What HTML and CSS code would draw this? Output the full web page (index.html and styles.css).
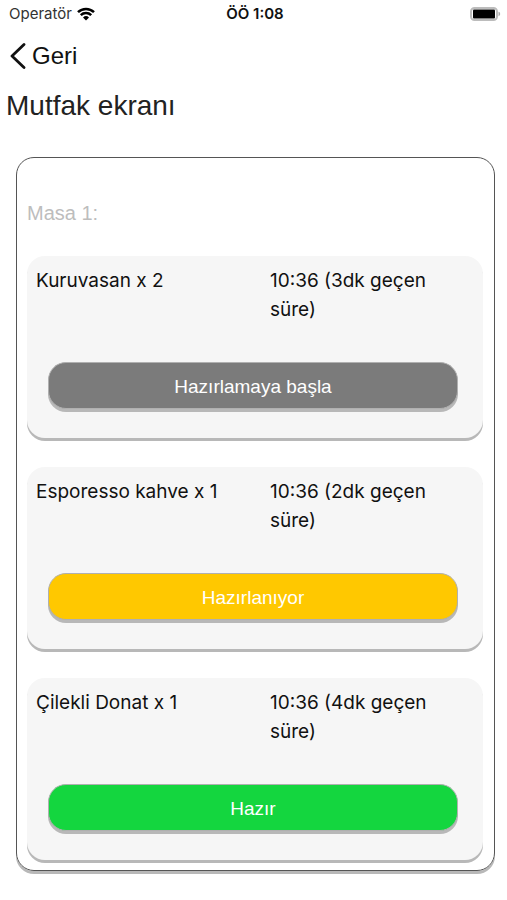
FILE: index.html
```html
<!DOCTYPE html>
<html lang="tr">
<head>
<meta charset="utf-8">
<meta name="viewport" content="width=device-width, initial-scale=1">
<title>Mutfak ekranı</title>
<link rel="stylesheet" href="styles.css">
</head>
<body>
<header class="status">
  <div class="carrier">
    <span>Operatör</span>
    <svg class="wifi" viewBox="0 0 18 14" aria-hidden="true">
      <path d="M1 5.2a11.4 11.4 0 0 1 16 0M3.8 8.2a7.4 7.4 0 0 1 10.4 0" fill="none" stroke="#000" stroke-width="2.5"/>
      <path d="M9 13.6 6 10.5a4.3 4.3 0 0 1 6 0Z"/>
    </svg>
  </div>
  <span class="clock">ÖÖ 1:08</span>
  <svg class="battery" viewBox="0 0 31 14" aria-hidden="true">
    <rect x="1" y="1" width="26" height="12" rx="3.5" fill="#fff" stroke="#bcbcbc" stroke-width="2"/>
    <rect x="3" y="2.6" width="22" height="8.8" rx="1"/>
    <path d="M28.5 4.8c2.2.6 2.2 3.8 0 4.4Z" fill="#aaa"/>
  </svg>
</header>
<nav class="nav">
  <a class="back" href="#">
    <svg class="chevron" viewBox="0 0 16 26" aria-hidden="true"><path d="M14 1.5 2 13 14 24.5" fill="none" stroke="#111" stroke-width="2.8" stroke-linecap="round" stroke-linejoin="round"/></svg>
    <span>Geri</span>
  </a>
</nav>
<main>
  <h1 class="title">Mutfak ekranı</h1>
  <section class="table-panel">
    <h2 class="table-name">Masa 1:</h2>
    <ul class="orders">
      <li class="order">
        <div class="details"><span>Kuruvasan x 2</span><span>10:36 (3dk geçen süre)</span></div>
        <button class="action waiting" type="button">Hazırlamaya başla</button>
      </li>
      <li class="order">
        <div class="details"><span>Esporesso kahve x 1</span><span>10:36 (2dk geçen süre)</span></div>
        <button class="action preparing" type="button">Hazırlanıyor</button>
      </li>
      <li class="order">
        <div class="details"><span>Çilekli Donat x 1</span><span>10:36 (4dk geçen süre)</span></div>
        <button class="action ready" type="button">Hazır</button>
      </li>
    </ul>
  </section>
</main>
</body>
</html>
```
FILE: styles.css
```css
* {
  box-sizing: border-box;
}

body {
  margin: 0;
  background: #fff;
  color: #111;
  font-family: Inter, "Liberation Sans", sans-serif;
}

.status {
  display: grid;
  grid-template-columns: 1fr auto 1fr;
  align-items: center;
  height: 27px;
  padding: 0 6px 0 9px;
  font-size: 15px;
}

.carrier {
  display: flex;
  align-items: center;
  gap: 5px;
  color: #333;
}

.wifi {
  width: 18px;
  height: 14px;
}

.clock {
  font-weight: 600;
}

.battery {
  justify-self: end;
  width: 31px;
  height: 14px;
}

.nav {
  display: flex;
  align-items: center;
  height: 58px;
  padding: 0 10px;
}

.back {
  display: flex;
  align-items: center;
  gap: 6px;
  color: #111;
  font-family: "Liberation Sans", sans-serif;
  font-size: 24px;
  line-height: 28px;
  text-decoration: none;
}

.chevron {
  width: 16px;
  height: 26px;
}

.title {
  margin: 5px 6px 35px;
  color: #222;
  font: 400 28px/32px "Liberation Sans", sans-serif;
}

.table-panel {
  margin: 0 12px 32px 16px;
  padding: 42px 11px 10px 10px;
  border: 1px solid #555;
  border-radius: 18px;
  box-shadow: 0 3px 0 #b8b8b8;
}

.table-name {
  margin: 0 0 30px;
  color: #bdbdbd;
  font: 400 20px/26px "Liberation Sans", sans-serif;
}

.orders {
  display: flex;
  flex-direction: column;
  gap: 29px;
  margin: 0;
  padding: 0;
  list-style: none;
}

.order {
  padding: 10px 9px 29px;
  border-radius: 18px;
  background: #f6f6f6;
  box-shadow: 0 3px 0 #b8b8b8;
}

.details {
  display: grid;
  grid-template-columns: 1fr 1fr;
  gap: 30px;
  margin-bottom: 38px;
  font-size: 19px;
  line-height: 29px;
}

.action {
  display: block;
  width: calc(100% - 28px);
  height: 47px;
  margin: 0 16px 0 12px;
  padding: 2px 0 0;
  border: 1px solid #b0b0b0;
  border-radius: 18px;
  box-shadow: 0 3px 0 #b8b8b8;
  color: #fff;
  font: 400 19px/24px "Liberation Sans", sans-serif;
}

.waiting {
  background: #7b7b7b;
}

.preparing {
  background: #ffc800;
}

.ready {
  background: #14d63f;
}
```
